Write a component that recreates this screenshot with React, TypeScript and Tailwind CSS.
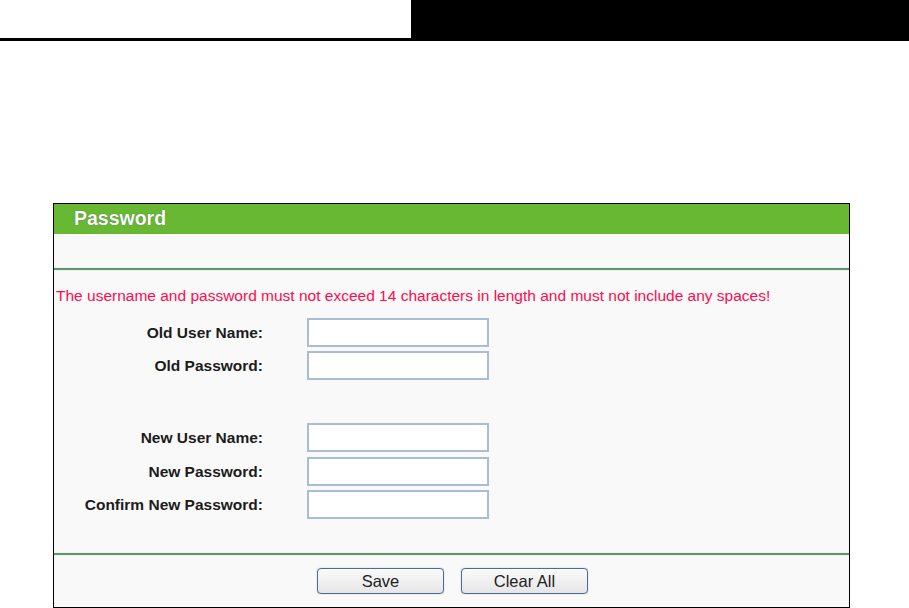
import React from "react";

const font = { fontFamily: '"Liberation Sans", Arial, sans-serif' };

function Row({ label, className }: { label: string; className: string }) {
  return (
    <div className={`flex items-center ${className}`}>
      <div className="w-[209px] text-right text-[15.5px] font-bold text-[#1c1c1c] leading-[18px]">{label}</div>
      <input
        type="text"
        className="ml-[44px] w-[182px] h-[29px] bg-white border-2 border-[#aabdd2] outline-none"
      />
    </div>
  );
}

export default function App() {
  return (
    <div className="w-[909px] h-[608px] bg-white overflow-hidden" style={font}>
      <div className="flex h-[41px]">
        <div className="w-[411px] h-[41px] border-b-[3px] border-black bg-white" />
        <div className="flex-1 bg-black" />
      </div>
      <div className="mt-[162px] ml-[53px] w-[797px] h-[405px] border border-black bg-[#f9f9f9] flex flex-col">
        <div className="h-[30px] bg-[#68b834] flex items-center pl-[20px]">
          <span
            className="text-white font-bold text-[19.5px] leading-none"
            style={{ textShadow: "0 0 1px #2f5a1a" }}
          >
            Password
          </span>
        </div>
        <div className="h-[34px]" />
        <div className="h-[2px] bg-[#5a966e] shadow-[0_0_1px_#8fb99c]" />
        <div className="h-[48px] pt-[17px] pl-[2px]">
          <div className="text-[15.5px] leading-[18px] text-[#ff0a4e] whitespace-nowrap">
            The username and password must not exceed 14 characters in length and must not include any spaces!
          </div>
        </div>
        <div className="flex flex-col">
          <Row label="Old User Name:" className="" />
          <Row label="Old Password:" className="mt-[4px]" />
          <Row label="New User Name:" className="mt-[43px]" />
          <Row label="New Password:" className="mt-[5px]" />
          <Row label="Confirm New Password:" className="mt-[4px]" />
        </div>
        <div className="mt-[34px] h-[2px] bg-[#5a966e] shadow-[0_0_1px_#8fb99c]" />
        <div className="flex-1 flex justify-center pt-[13px] gap-[17px] pl-[2px]">
          <button className="w-[127px] h-[26px] rounded-[4px] border border-[#4f6c8c] bg-gradient-to-b from-[#fafafa] to-[#e6e6e6] text-[16.5px] text-[#222] leading-none shadow-[0_0_1px_#6f8aa8]">
            Save
          </button>
          <button className="w-[127px] h-[26px] rounded-[4px] border border-[#4f6c8c] bg-gradient-to-b from-[#fafafa] to-[#e6e6e6] text-[16.5px] text-[#222] leading-none shadow-[0_0_1px_#6f8aa8]">
            Clear All
          </button>
        </div>
      </div>
    </div>
  );
}
